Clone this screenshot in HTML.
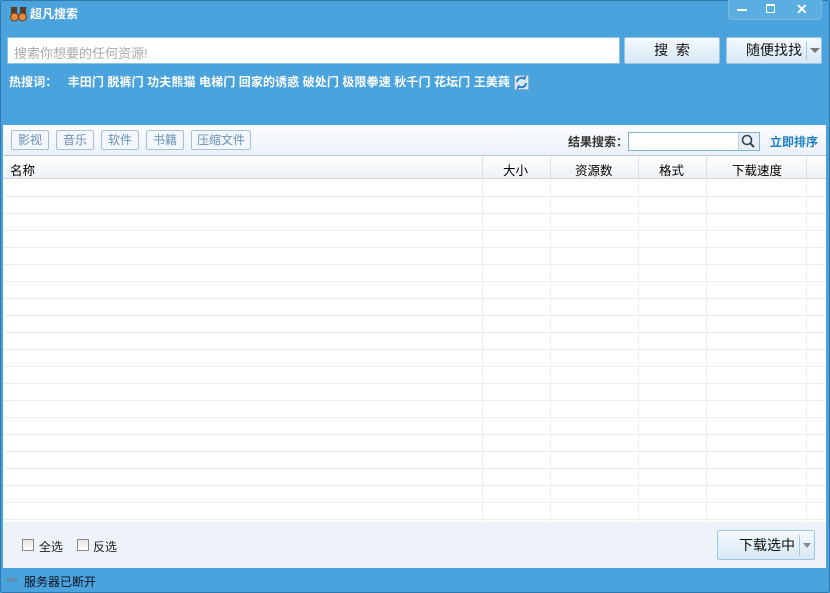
<!DOCTYPE html>
<html><head><meta charset="utf-8"><style>
*{margin:0;padding:0;box-sizing:border-box}
body{width:830px;height:593px;overflow:hidden;font-family:"Liberation Sans","Noto Sans CJK SC","WenQuanYi Zen Hei",sans-serif;font-size:12px;background:#4aa3dc;position:relative}
.win{position:absolute;left:0;top:0;width:830px;height:593px;border:1px solid #2f79ad;border-radius:3px}
.abs{position:absolute}
.title{left:30px;top:5px;color:#fff;font-weight:bold;font-size:12px}
.ctl{left:728px;top:0;width:94px;height:20px;border:1px solid #7bb8e2;border-top:none;border-radius:0 0 4px 4px;background:#5aaee2}
.inp{left:7px;top:37px;width:613px;height:27px;background:#fff;border:1px solid #8cc3e8;color:#aaa;font-size:13px;padding:5px 6px}
.btn{background:linear-gradient(#f4f9fd,#d7e8f5);border:1px solid #9cc7e6;border-radius:2px;color:#111;font-size:14px;text-align:center}
.hot{left:9px;top:73px;color:#fff;font-weight:bold;font-size:12px;word-spacing:0;letter-spacing:0.1px}
.tool{left:3px;top:125px;width:823px;height:31px;background:linear-gradient(#fdfeff,#eaf1f8);border-bottom:1px solid #b7c7d6}
.tb{top:130px;height:20px;border:1px solid #a9bfd3;border-radius:2px;background:#f3f7fb;color:#6990b5;font-size:12px;line-height:18px;text-align:center}
.table{left:3px;top:156px;width:823px;height:366px;background:#fff;overflow:hidden}
.hdr{position:absolute;left:0;top:0;width:823px;height:23px;background:linear-gradient(#fff,#eef2f6);border-bottom:1px solid #d0d6dc;font-size:12.5px}
.foot{left:3px;top:522px;width:823px;height:46px;background:#eef3f9}
.cb{width:12px;height:12px;border:1px solid #888;background:linear-gradient(#e6e6e6,#fff)}
</style></head><body><div class="win"></div>
<svg class="abs" style="left:10px;top:6px" width="18" height="16"><rect x="1" y="1" width="6" height="9" fill="#5a3d22"/><rect x="10" y="1" width="6" height="9" fill="#5a3d22"/><circle cx="4.5" cy="11" r="4" fill="#e8893a" stroke="#5a3d22"/><circle cx="12.5" cy="11" r="4" fill="#e8893a" stroke="#5a3d22"/></svg>
<div class="abs title">超凡搜索</div>
<div class="abs ctl"></div>
<div class="abs" style="left:737px;top:9px;width:10px;height:2px;background:#fff"></div>
<div class="abs" style="left:766px;top:4px;width:9px;height:9px;border:1px solid #fff;border-top-width:2px"></div>
<div class="abs" style="left:796px;top:1px;color:#fff;font-size:14px;font-weight:bold">✕</div>
<div class="abs inp">搜索你想要的任何资源!</div>
<div class="abs btn" style="left:624px;top:37px;width:96px;height:27px;line-height:25px">搜&nbsp;&nbsp;索</div>
<div class="abs btn" style="left:726px;top:37px;width:96px;height:27px;line-height:25px;text-align:left;padding-left:19px">随便找找</div>
<div class="abs" style="left:806px;top:41px;width:1px;height:19px;background:#a8c8e2"></div>
<div class="abs" style="left:810px;top:48px;border:5px solid transparent;border-top:5px solid #777"></div>
<div class="abs hot">热搜词：&nbsp;&nbsp;&nbsp;丰田门 脱裤门 功夫熊猫 电梯门 回家的诱惑 破处门 极限拳速 秋千门 花坛门 王美莼</div>
<svg class="abs" style="left:514px;top:75px" width="15" height="15"><rect x="0.5" y="0.5" width="14" height="14" fill="#d8e8f2" stroke="#8fb0c8"/><path d="M3 7a4.5 4.5 0 0 1 8-2.5M12 8a4.5 4.5 0 0 1-8 2.5" fill="none" stroke="#2b7fc0" stroke-width="2"/><path d="M9 3l3 0 0-3zM6 12l-3 0 0 3z" fill="#2b7fc0"/></svg>
<div class="abs tool"></div>
<div class="abs tb" style="left:11px;width:38px">影视</div>
<div class="abs tb" style="left:56px;width:38px">音乐</div>
<div class="abs tb" style="left:101px;width:38px">软件</div>
<div class="abs tb" style="left:146px;width:38px">书籍</div>
<div class="abs tb" style="left:191px;width:60px">压缩文件</div>
<div class="abs" style="left:568px;top:133px;font-weight:bold;color:#333">结果搜索：</div>
<div class="abs" style="left:628px;top:132px;width:132px;height:19px;border:1px solid #7fb3d8;background:#fff"></div>
<div class="abs" style="left:738px;top:133px;width:21px;height:17px;background:#e8eef4;border-left:1px solid #bcd"></div>
<svg class="abs" style="left:741px;top:134px" width="15" height="15"><circle cx="6" cy="6" r="4.5" fill="none" stroke="#345" stroke-width="1.6"/><path d="M9 9l4 4" stroke="#345" stroke-width="2"/></svg>
<div class="abs" style="left:770px;top:133px;font-weight:bold;color:#1f7fc4">立即排序</div>
<div class="abs table">
<svg width="823" height="366" style="position:absolute;left:0;top:0">
<g stroke="#ececec">
<line x1="0" y1="40.5" x2="823" y2="40.5"/><line x1="0" y1="57.5" x2="823" y2="57.5"/><line x1="0" y1="74.5" x2="823" y2="74.5"/><line x1="0" y1="91.5" x2="823" y2="91.5"/><line x1="0" y1="108.5" x2="823" y2="108.5"/><line x1="0" y1="125.5" x2="823" y2="125.5"/><line x1="0" y1="142.5" x2="823" y2="142.5"/><line x1="0" y1="159.5" x2="823" y2="159.5"/><line x1="0" y1="176.5" x2="823" y2="176.5"/><line x1="0" y1="193.5" x2="823" y2="193.5"/><line x1="0" y1="210.5" x2="823" y2="210.5"/><line x1="0" y1="227.5" x2="823" y2="227.5"/><line x1="0" y1="244.5" x2="823" y2="244.5"/><line x1="0" y1="261.5" x2="823" y2="261.5"/><line x1="0" y1="278.5" x2="823" y2="278.5"/><line x1="0" y1="295.5" x2="823" y2="295.5"/><line x1="0" y1="312.5" x2="823" y2="312.5"/><line x1="0" y1="329.5" x2="823" y2="329.5"/><line x1="0" y1="346.5" x2="823" y2="346.5"/><line x1="0" y1="363.5" x2="823" y2="363.5"/>
<line x1="479.5" y1="0" x2="479.5" y2="366"/><line x1="547.5" y1="0" x2="547.5" y2="366"/><line x1="635.5" y1="0" x2="635.5" y2="366"/><line x1="703.5" y1="0" x2="703.5" y2="366"/><line x1="803.5" y1="0" x2="803.5" y2="366"/>
</g></svg>
<div class="hdr">
<span class="abs" style="left:7px;top:4px">名称</span>
<span class="abs" style="left:500px;top:4px">大小</span>
<span class="abs" style="left:572px;top:4px">资源数</span>
<span class="abs" style="left:656px;top:4px">格式</span>
<span class="abs" style="left:729px;top:4px">下载速度</span>
<span class="abs" style="left:479px;top:0;width:1px;height:23px;background:#dde"></span>
<span class="abs" style="left:547px;top:0;width:1px;height:23px;background:#dde"></span>
<span class="abs" style="left:635px;top:0;width:1px;height:23px;background:#dde"></span>
<span class="abs" style="left:703px;top:0;width:1px;height:23px;background:#dde"></span>
<span class="abs" style="left:803px;top:0;width:1px;height:23px;background:#dde"></span>
</div></div>
<div class="abs foot"></div>
<div class="abs cb" style="left:22px;top:539px"></div><div class="abs" style="left:39px;top:538px;color:#222">全选</div>
<div class="abs cb" style="left:77px;top:539px"></div><div class="abs" style="left:93px;top:538px;color:#222">反选</div>
<div class="abs btn" style="left:717px;top:530px;width:98px;height:30px;line-height:28px;text-align:left;padding-left:21px">下载选中</div>
<div class="abs" style="left:799px;top:535px;width:1px;height:21px;background:#a8c8e2"></div>
<div class="abs" style="left:803px;top:543px;border:4px solid transparent;border-top:5px solid #888"></div>
<div class="abs" style="left:7px;top:573px;color:#777;font-size:12px">⚯</div>
<div class="abs" style="left:24px;top:573px;color:#112;font-size:12px">服务器已断开</div>
</body></html>
